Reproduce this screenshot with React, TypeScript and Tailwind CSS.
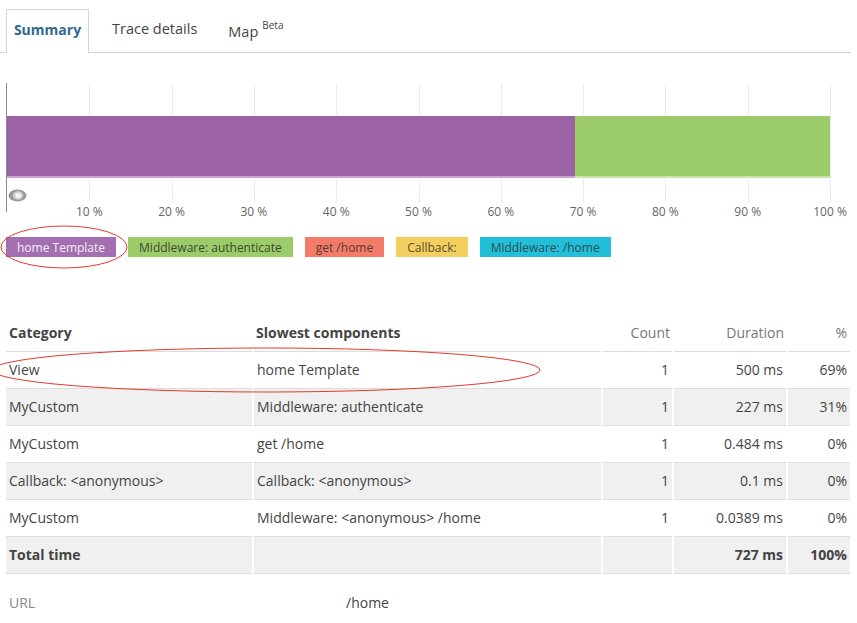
const ticks = [10, 20, 30, 40, 50, 60, 70, 80, 90, 100];

const legend = [
  { label: 'home Template', cls: 'bg-[#a36fb0] text-[#f4ecf6]' },
  { label: 'Middleware: authenticate', cls: 'bg-[#9ccc6a] text-[#3d4a32]' },
  { label: 'get /home', cls: 'bg-[#f27c67] text-[#5a3a33]' },
  { label: 'Callback:', cls: 'bg-[#f2cf5e] text-[#5a4e2c]' },
  { label: 'Middleware: /home', cls: 'bg-[#22bfd8] text-[#2a4d56]' },
];

const rows = [
  ['View', 'home Template', '1', '500 ms', '69%'],
  ['MyCustom', 'Middleware: authenticate', '1', '227 ms', '31%'],
  ['MyCustom', 'get /home', '1', '0.484 ms', '0%'],
  ['Callback: <anonymous>', 'Callback: <anonymous>', '1', '0.1 ms', '0%'],
  ['MyCustom', 'Middleware: <anonymous> /home', '1', '0.0389 ms', '0%'],
];

function Tabs() {
  return (
    <div className="flex items-end h-[53px] pt-[9px] pl-[6px] w-[851px] border-b border-[#d4d4d4]">
      <div className="h-[44px] w-[83px] -mb-px pb-[4px] bg-white border border-b-0 border-[#d4d4d4] flex items-center justify-center text-[14px] font-bold text-[#2e6a92]">
        Summary
      </div>
      <div className="h-[44px] pl-[23px] pb-[2px] flex items-center text-[14.5px] text-[#444]">Trace details</div>
      <div className="h-[44px] pl-[31px] pt-[4px] flex items-center text-[14.5px] text-[#444]">
        Map<sup className="text-[10px] ml-[4px] -top-[7px]">Beta</sup>
      </div>
    </div>
  );
}

function Chart() {
  return (
    <div className="relative mt-[30px] ml-[6px] h-[140px] w-[851px]">
      <div className="absolute left-0 top-0 w-px h-[129px] bg-[#8a8a8a]" />
      {ticks.map((t) => (
        <div key={t} className="absolute top-0 w-px h-[120px] bg-[#ececec]" style={{ left: 1 + t * 8.23 }} />
      ))}
      <div className="absolute left-px top-[33px] h-[62px] w-[823px] flex">
        <div className="h-full bg-[#9b62a6] border-b-2 border-[#c9a3d1]" style={{ width: '69%' }} />
        <div className="h-full flex-1 bg-[#9ccc6a] border-b-2 border-[#c8e4ab]" />
      </div>
      <svg className="absolute left-[2px] top-[106px]" width="19" height="13" viewBox="0 0 19 13">
        <ellipse cx="9.5" cy="6.5" rx="9" ry="6" fill="#999999" />
        <ellipse cx="10" cy="6.5" rx="5.2" ry="4.2" fill="#cfcfcf" />
        <ellipse cx="10.2" cy="6.5" rx="2.8" ry="2.6" fill="#f6f6f6" />
      </svg>
      {ticks.map((t) => (
        <div
          key={'l' + t}
          className="absolute top-[120px] w-[40px] -ml-[20px] text-center text-[12px] text-[#666]"
          style={{ left: 1 + t * 8.23 }}
        >
          {t} %
        </div>
      ))}
    </div>
  );
}

function Legend() {
  return (
    <div className="relative flex gap-[12px] ml-[6px] mt-[14px]">
      {legend.map((l) => (
        <div key={l.label} className={`h-[20px] px-[11px] pt-px flex items-center text-[12px] ${l.cls}`}>
          {l.label}
        </div>
      ))}
      <svg className="absolute -left-[8px] -top-[12px] pointer-events-none" width="140" height="46" viewBox="0 0 140 46">
        <ellipse cx="66" cy="22" rx="63" ry="21" fill="none" stroke="#e8382b" strokeWidth="1" />
      </svg>
    </div>
  );
}

function Table() {
  const cell = 'h-[37px] px-[3px] border-b border-[#dddddd] align-middle';
  return (
    <div className="relative ml-[6px] mt-[57px] w-[844px]">
      <table className="w-[844px] border-collapse table-fixed text-[14px] text-[#444]">
        <colgroup>
          <col className="w-[247px]" />
          <col className="w-[349px]" />
          <col className="w-[71px]" />
          <col className="w-[114px]" />
          <col className="w-[63px]" />
        </colgroup>
        <thead>
          <tr>
            <th className={`${cell} text-left font-bold`}>Category</th>
            <th className={`${cell} text-left font-bold`}>Slowest components</th>
            <th className={`${cell} text-right font-normal text-[#777]`}>Count</th>
            <th className={`${cell} text-right font-normal text-[#777]`}>Duration</th>
            <th className={`${cell} text-right font-normal text-[#777]`}>%</th>
          </tr>
        </thead>
        <tbody>
          {rows.map((r, i) => (
            <tr key={i} className={i % 2 === 1 ? 'bg-[#f0f0f0]' : 'bg-white'}>
              <td className={`${cell} border-r-2 border-r-white`}>{r[0]}</td>
              <td className={`${cell} border-r-2 border-r-white`}>{r[1]}</td>
              <td className={`${cell} border-r-2 border-r-white text-right`}>{r[2]}</td>
              <td className={`${cell} border-r-2 border-r-white text-right`}>{r[3]}</td>
              <td className={`${cell} text-right`}>{r[4]}</td>
            </tr>
          ))}
          <tr className="bg-[#f0f0f0] font-bold">
            <td className={`${cell} border-r-2 border-r-white`}>Total time</td>
            <td className={`${cell} border-r-2 border-r-white`} />
            <td className={`${cell} border-r-2 border-r-white`} />
            <td className={`${cell} border-r-2 border-r-white text-right`}>727 ms</td>
            <td className={`${cell} text-right`}>100%</td>
          </tr>
        </tbody>
      </table>
      <svg className="absolute -left-[20px] top-[33px] pointer-events-none" width="570" height="48" viewBox="0 0 570 48">
        <ellipse cx="280" cy="23" rx="274" ry="22" fill="none" stroke="#e8382b" strokeWidth="1" />
      </svg>
      <div className="flex mt-[19px] h-[20px] items-center text-[14px]">
        <div className="w-[340px] pl-[3px] text-[#888]">URL</div>
        <div className="text-[#444]">/home</div>
      </div>
    </div>
  );
}

export default function App() {
  return (
    <div className="w-[857px] h-[623px] bg-white overflow-hidden font-['Open_Sans',sans-serif]">
      <Tabs />
      <Chart />
      <Legend />
      <Table />
    </div>
  );
}
